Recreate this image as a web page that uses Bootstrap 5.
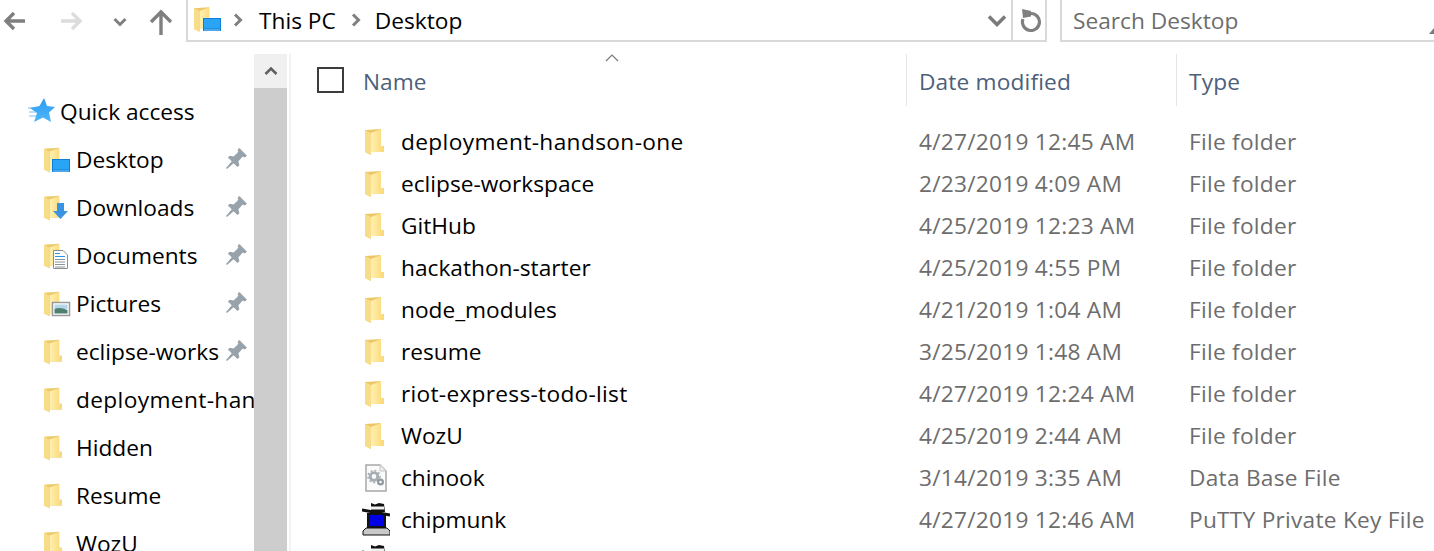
<!DOCTYPE html>
<html lang="en">
<head>
  <meta charset="UTF-8">
  <title>Desktop</title>
  <link href="https://cdn.jsdelivr.net/npm/bootstrap@5.3.0/dist/css/bootstrap.min.css" rel="stylesheet">
  <style>
    html, body { height: 551px; overflow: hidden; background: #fff; }
    body { font-family: "Open Sans", "Noto Sans", sans-serif; font-size: 22.7px; color: #000; }
    .top-strip { height: 42px; }
    .nav-btns { width: 186px; flex: none; position: relative; height: 42px; }
    .nav-btns svg { position: absolute; }
    .addr-box { width: 861px; flex: none; height: 42px; border-left: 2px solid #d9d9d9; border-bottom: 2px solid #d9d9d9; border-right: 2px solid #d9d9d9; }
    .crumb-txt { line-height: 40px; padding-top: 2px; white-space: nowrap; }
    .addr-refresh { width: 34px; height: 40px; border-left: 2px solid #d9d9d9; padding-left: 4px; }
    .search-box { margin-left: 13px; flex: 1; height: 42px; border-left: 2px solid #d9d9d9; border-bottom: 2px solid #d9d9d9; color: #6d6d6d; line-height: 42px; padding-left: 11px; position: relative; }
    .search-grip { position: absolute; right: 0; top: 28px; }
    .main-area { height: 509px; padding-top: 12px; overflow: hidden; }
    .side-pane { width: 254px; flex: none; overflow: hidden; padding-top: 34px; }
    .side-row { height: 48px; white-space: nowrap; padding-left: 44px; }
    .side-row.qa-row { padding-left: 28px; }
    .side-label { overflow: hidden; flex: none; margin-left: 14px; }
    .qa-row .side-label { margin-left: 5px; }
    .label-pinned { width: 143px; }
    .pin-mark { margin-left: 7px; margin-top: -4px; flex: none; }
    .over-folder { margin-right: -10px; }
    .scroll-track { width: 33px; flex: none; background: #cdcdcd; }
    .scroll-up { height: 34px; background: #f0f0f0; }
    .pane-line { width: 2px; flex: none; margin-left: 2px; background: #f2f2f2; }
    .file-pane { flex: 1; min-width: 0; overflow: hidden; }
    .col-head { height: 52px; color: #4c607a; position: relative; }
    .head-cell { border-left: 1px solid #e5e5e5; padding-left: 12px; line-height: 56px; letter-spacing: .15px; }
    .head-name { width: 615px; flex: none; padding-left: 26px; }
    .chk-mark { width: 27px; height: 26px; border: 2px solid #3c3c3c; flex: none; margin-right: 19px; }
    .head-date { width: 270px; flex: none; }
    .sort-mark { position: absolute; left: 314px; top: 0; }
    .files-list { padding-top: 15px; }
    .file-row { height: 42px; white-space: nowrap; }
    .file-name { width: 615px; min-height: 34px; flex: none; padding-left: 74px; position: relative; }
    .file-name svg { position: absolute; left: 74px; top: 50%; transform: translateY(-50%); }
    .file-name .putty-icon { left: 71px; transform: none; top: 0; }
    .file-name span { padding-left: 37px; margin-left: -1px; }
    .wide-name { letter-spacing: .37px; }
    .wider-name { letter-spacing: .28px; }
    .file-date { width: 270px; flex: none; padding-left: 13px; color: #6d6d6d; letter-spacing: .25px; }
    .file-type { padding-left: 13px; color: #6d6d6d; letter-spacing: .25px; }
  </style>
</head>
<body>
  <svg width="0" height="0" class="d-block position-absolute">
    <defs>
      <linearGradient id="fGrad" x1="0" y1="0" x2="1" y2="0">
        <stop offset="0" stop-color="#fff0b0"/>
        <stop offset="1" stop-color="#fbd874"/>
      </linearGradient>
      <linearGradient id="starGrad" x1="0" y1="0" x2="0" y2="1">
        <stop offset="0" stop-color="#2b9cf2"/>
        <stop offset="1" stop-color="#4fb6fa"/>
      </linearGradient>
      <symbol id="folder" viewBox="0 0 19 26">
        <path d="M0 1 L16 0 V17 H19 V23 H6 V26 L0 23 Z" fill="#ecc766"/>
        <path d="M6 4 L16 0 V17 H19 V23 H6 Z" fill="url(#fGrad)"/>
        <path d="M0 1 L6 4 V26 L0 23 Z" fill="#f7dc8a"/>
      </symbol>
      <symbol id="pin" viewBox="0 0 22 22">
        <path d="M14 0L22 8 19.500 10 17.500 9 13 14 14 18 12 20 8 16 1 22 0 21 6 14 2 10 4 8 8 9 13 4 12 2Z" fill="#98a2aa"/>
      </symbol>
      <symbol id="screen" viewBox="0 0 18 13">
        <rect width="18" height="13" fill="#0d7fd8"/>
        <rect x="1" y="1" width="16" height="9.500" fill="#2aa4f4"/>
        <rect x="1" y="11.500" width="16" height="1" fill="#8fd0fa"/>
      </symbol>
      <symbol id="putty" viewBox="0 0 28 34">
        <rect x="5" y="10" width="19" height="15" fill="#111"/>
        <rect x="7" y="12" width="15" height="11" fill="#0000e6"/>
        <path d="M4 25h21l3 3v4H1v-4z" fill="#c8c8c8" stroke="#111"/>
        <path d="M9 0l4 1.500 4-1.500 5 1 1 8H9z" fill="#111"/>
        <rect x="9" y="3.500" width="13" height="3" fill="#f0f0f0"/>
        <path d="M0 7l28 5" stroke="#111" stroke-width="3"/>
      </symbol>
    </defs>
  </svg>

  <div class="top-strip d-flex">
    <div class="nav-btns">
      <svg style="left:3px;top:11px" width="23" height="20" viewBox="0 0 23 20"><path d="M22 10H3M11 2l-8 8 8 8" fill="none" stroke="#7f7f7f" stroke-width="3.400"/></svg>
      <svg style="left:60px;top:11px" width="23" height="20" viewBox="0 0 23 20"><path d="M1 10h19M12 2l8 8-8 8" fill="none" stroke="#dcdcdc" stroke-width="3.400"/></svg>
      <svg style="left:113px;top:17px" width="14" height="10" viewBox="0 0 14 10"><path d="M1.500 2l5.500 5.500 5.500-5.500" fill="none" stroke="#808080" stroke-width="3"/></svg>
      <svg style="left:149px;top:9px" width="24" height="26" viewBox="0 0 24 26"><path d="M12 26V4M2 13l10-10 10 10" fill="none" stroke="#7f7f7f" stroke-width="3.400"/></svg>
    </div>
    <div class="addr-box d-flex align-items-center">
      <svg class="flex-shrink-0" width="28" height="28" viewBox="0 0 28 28" style="margin-left:6px">
        <use href="#folder" x="0" y="0" width="18" height="27"/>
        <use href="#screen" x="9" y="12" width="18" height="13"/>
      </svg>
      <svg style="margin-left:11px" width="10" height="14" viewBox="0 0 10 14"><path d="M2 1.500l5.500 5.500-5.500 5.500" fill="none" stroke="#7f7f7f" stroke-width="3"/></svg>
      <span class="crumb-txt" style="margin-left:16px">This PC</span>
      <svg style="margin-left:15px" width="10" height="14" viewBox="0 0 10 14"><path d="M2 1.500l5.500 5.500-5.500 5.500" fill="none" stroke="#7f7f7f" stroke-width="3"/></svg>
      <span class="crumb-txt" style="margin-left:14px">Desktop</span>
      <svg class="ms-auto" style="margin-right:4px" width="20" height="13" viewBox="0 0 20 13"><path d="M2 2.500l8 8 8-8" fill="none" stroke="#7a7a7a" stroke-width="3.500"/></svg>
      <div class="addr-refresh d-flex align-items-center justify-content-center">
        <svg width="22" height="24" viewBox="0 0 22 24"><path d="M11 5.500A8.500 8.500 0 1 1 3 11" fill="none" stroke="#7f7f7f" stroke-width="3.200"/><path d="M2 1L11 3V8.500L3 10Z" fill="#7f7f7f"/></svg>
      </div>
    </div>
    <div class="search-box">Search Desktop
      <svg class="search-grip" width="5" height="6" viewBox="0 0 5 6"><path d="M5 0v6H0z" fill="#7a7a7a"/></svg>
    </div>
  </div>

  <div class="main-area d-flex">
    <div class="side-pane">
      <div class="side-row qa-row d-flex align-items-center">
        <svg width="27" height="26" viewBox="0 0 27 26" class="flex-shrink-0" style="margin-top:-2px"><path d="M0 10h7M1 14h7M1 18h7" stroke="#a8d6f8" stroke-width="1.500"/><path d="M16 0L19 8 27 9 21 14.500 23 24 15 19.500 6 24 9 15 2 10 11.500 8Z" fill="url(#starGrad)"/></svg>
        <span class="side-label">Quick access</span>
      </div>
      <div class="side-row d-flex align-items-center">
        <svg width="28" height="27" viewBox="0 0 28 27" class="flex-shrink-0 over-folder"><use href="#folder" width="18" height="26"/><use href="#screen" x="8" y="12" width="18" height="13"/></svg>
        <span class="side-label label-pinned">Desktop</span>
        <svg class="pin-mark" width="21" height="21"><use href="#pin" width="21" height="21"/></svg>
      </div>
      <div class="side-row d-flex align-items-center">
        <svg width="28" height="27" viewBox="0 0 28 27" class="flex-shrink-0 over-folder"><use href="#folder" width="18" height="26"/><path d="M13 8h7v8h4l-7.500 8-7.500-8h4z" fill="#3a94e4"/></svg>
        <span class="side-label label-pinned">Downloads</span>
        <svg class="pin-mark" width="21" height="21"><use href="#pin" width="21" height="21"/></svg>
      </div>
      <div class="side-row d-flex align-items-center">
        <svg width="28" height="27" viewBox="0 0 28 27" class="flex-shrink-0 over-folder"><use href="#folder" width="18" height="26"/><path d="M9.500 7.500h9.500l4.500 4.500v13.500h-14z" fill="#fff" stroke="#8d8d8d"/><path d="M11 10.500h5M11 13.500h10" stroke="#2f8fe0" stroke-width="1.200"/><path d="M11 16.500h10M11 19h10M11 21.500h10M11 24h10" stroke="#8a9296"/></svg>
        <span class="side-label label-pinned">Documents</span>
        <svg class="pin-mark" width="21" height="21"><use href="#pin" width="21" height="21"/></svg>
      </div>
      <div class="side-row d-flex align-items-center">
        <svg width="28" height="27" viewBox="0 0 28 27" class="flex-shrink-0 over-folder"><use href="#folder" width="18" height="26"/><rect x="8.500" y="11.500" width="17" height="13" fill="#fff" stroke="#9a9a9a" stroke-width="1.500"/><rect x="10.500" y="13.500" width="13" height="4.500" fill="#b4d6e8"/><path d="M10.500 18c4-2 8-1 13 1v3.500h-13z" fill="#4f7f70"/></svg>
        <span class="side-label label-pinned">Pictures</span>
        <svg class="pin-mark" width="21" height="21"><use href="#pin" width="21" height="21"/></svg>
      </div>
      <div class="side-row d-flex align-items-center">
        <svg width="18" height="26" class="flex-shrink-0"><use href="#folder" width="18" height="26"/></svg>
        <span class="side-label label-pinned">eclipse-workspace</span>
        <svg class="pin-mark" width="21" height="21"><use href="#pin" width="21" height="21"/></svg>
      </div>
      <div class="side-row d-flex align-items-center">
        <svg width="18" height="26" class="flex-shrink-0"><use href="#folder" width="18" height="26"/></svg>
        <span class="side-label wide-name">deployment-handson-one</span>
      </div>
      <div class="side-row d-flex align-items-center">
        <svg width="18" height="26" class="flex-shrink-0"><use href="#folder" width="18" height="26"/></svg>
        <span class="side-label">Hidden</span>
      </div>
      <div class="side-row d-flex align-items-center">
        <svg width="18" height="26" class="flex-shrink-0"><use href="#folder" width="18" height="26"/></svg>
        <span class="side-label">Resume</span>
      </div>
      <div class="side-row d-flex align-items-center">
        <svg width="18" height="26" class="flex-shrink-0"><use href="#folder" width="18" height="26"/></svg>
        <span class="side-label">WozU</span>
      </div>
    </div>
    <div class="scroll-track">
      <div class="scroll-up d-flex align-items-center justify-content-center">
        <svg width="14" height="10" viewBox="0 0 14 10"><path d="M1.500 8l5.500-5.500 5.500 5.500" fill="none" stroke="#606060" stroke-width="2.600"/></svg>
      </div>
    </div>
    <div class="pane-line"></div>
    <div class="file-pane">
      <div class="col-head d-flex">
        <div class="head-name d-flex align-items-center">
          <span class="chk-mark"></span><span class="pt-1">Name</span>
        </div>
        <div class="head-cell head-date">Date modified</div>
        <div class="head-cell">Type</div>
        <svg class="sort-mark" width="14" height="8" viewBox="0 0 14 8"><path d="M1 7l6-6 6 6" fill="none" stroke="#7a7a7a" stroke-width="1.200"/></svg>
      </div>
      <div class="files-list">
        <div class="file-row d-flex align-items-center"><div class="file-name"><svg width="19" height="26"><use href="#folder" width="19" height="26"/></svg><span class="wide-name">deployment-handson-one</span></div><div class="file-date">4/27/2019 12:45 AM</div><div class="file-type">File folder</div></div>
        <div class="file-row d-flex align-items-center"><div class="file-name"><svg width="19" height="26"><use href="#folder" width="19" height="26"/></svg><span>eclipse-workspace</span></div><div class="file-date">2/23/2019 4:09 AM</div><div class="file-type">File folder</div></div>
        <div class="file-row d-flex align-items-center"><div class="file-name"><svg width="19" height="26"><use href="#folder" width="19" height="26"/></svg><span>GitHub</span></div><div class="file-date">4/25/2019 12:23 AM</div><div class="file-type">File folder</div></div>
        <div class="file-row d-flex align-items-center"><div class="file-name"><svg width="19" height="26"><use href="#folder" width="19" height="26"/></svg><span>hackathon-starter</span></div><div class="file-date">4/25/2019 4:55 PM</div><div class="file-type">File folder</div></div>
        <div class="file-row d-flex align-items-center"><div class="file-name"><svg width="19" height="26"><use href="#folder" width="19" height="26"/></svg><span>node_modules</span></div><div class="file-date">4/21/2019 1:04 AM</div><div class="file-type">File folder</div></div>
        <div class="file-row d-flex align-items-center"><div class="file-name"><svg width="19" height="26"><use href="#folder" width="19" height="26"/></svg><span>resume</span></div><div class="file-date">3/25/2019 1:48 AM</div><div class="file-type">File folder</div></div>
        <div class="file-row d-flex align-items-center"><div class="file-name"><svg width="19" height="26"><use href="#folder" width="19" height="26"/></svg><span class="wider-name">riot-express-todo-list</span></div><div class="file-date">4/27/2019 12:24 AM</div><div class="file-type">File folder</div></div>
        <div class="file-row d-flex align-items-center"><div class="file-name"><svg width="19" height="26"><use href="#folder" width="19" height="26"/></svg><span>WozU</span></div><div class="file-date">4/25/2019 2:44 AM</div><div class="file-type">File folder</div></div>
        <div class="file-row d-flex align-items-center"><div class="file-name"><svg width="22" height="28" viewBox="0 0 22 28"><path d="M1 1h14l6 6v20H1z" fill="#fbfbfb" stroke="#a8a8a8" stroke-width="1.500"/><path d="M15 1v6h6" fill="#eee" stroke="#c4c4c4"/><circle cx="9" cy="12.500" r="3.800" fill="none" stroke="#a4adb4" stroke-width="2.800"/><circle cx="9" cy="12.500" r="6" fill="none" stroke="#a4adb4" stroke-width="1.500" stroke-dasharray="2 2"/><circle cx="15.500" cy="18" r="2.400" fill="none" stroke="#8f999f" stroke-width="2.200"/></svg><span>chinook</span></div><div class="file-date">3/14/2019 3:35 AM</div><div class="file-type">Data Base File</div></div>
        <div class="file-row d-flex align-items-center"><div class="file-name"><svg class="putty-icon" width="28" height="34"><use href="#putty" width="28" height="34"/></svg><span>chipmunk</span></div><div class="file-date">4/27/2019 12:46 AM</div><div class="file-type">PuTTY Private Key File</div></div>
        <div class="file-row d-flex align-items-center"><div class="file-name"><svg class="putty-icon" width="28" height="34"><use href="#putty" width="28" height="34"/></svg></div></div>
      </div>
    </div>
  </div>
  <script src="https://cdn.jsdelivr.net/npm/bootstrap@5.3.0/dist/js/bootstrap.bundle.min.js"></script>
</body>
</html>
